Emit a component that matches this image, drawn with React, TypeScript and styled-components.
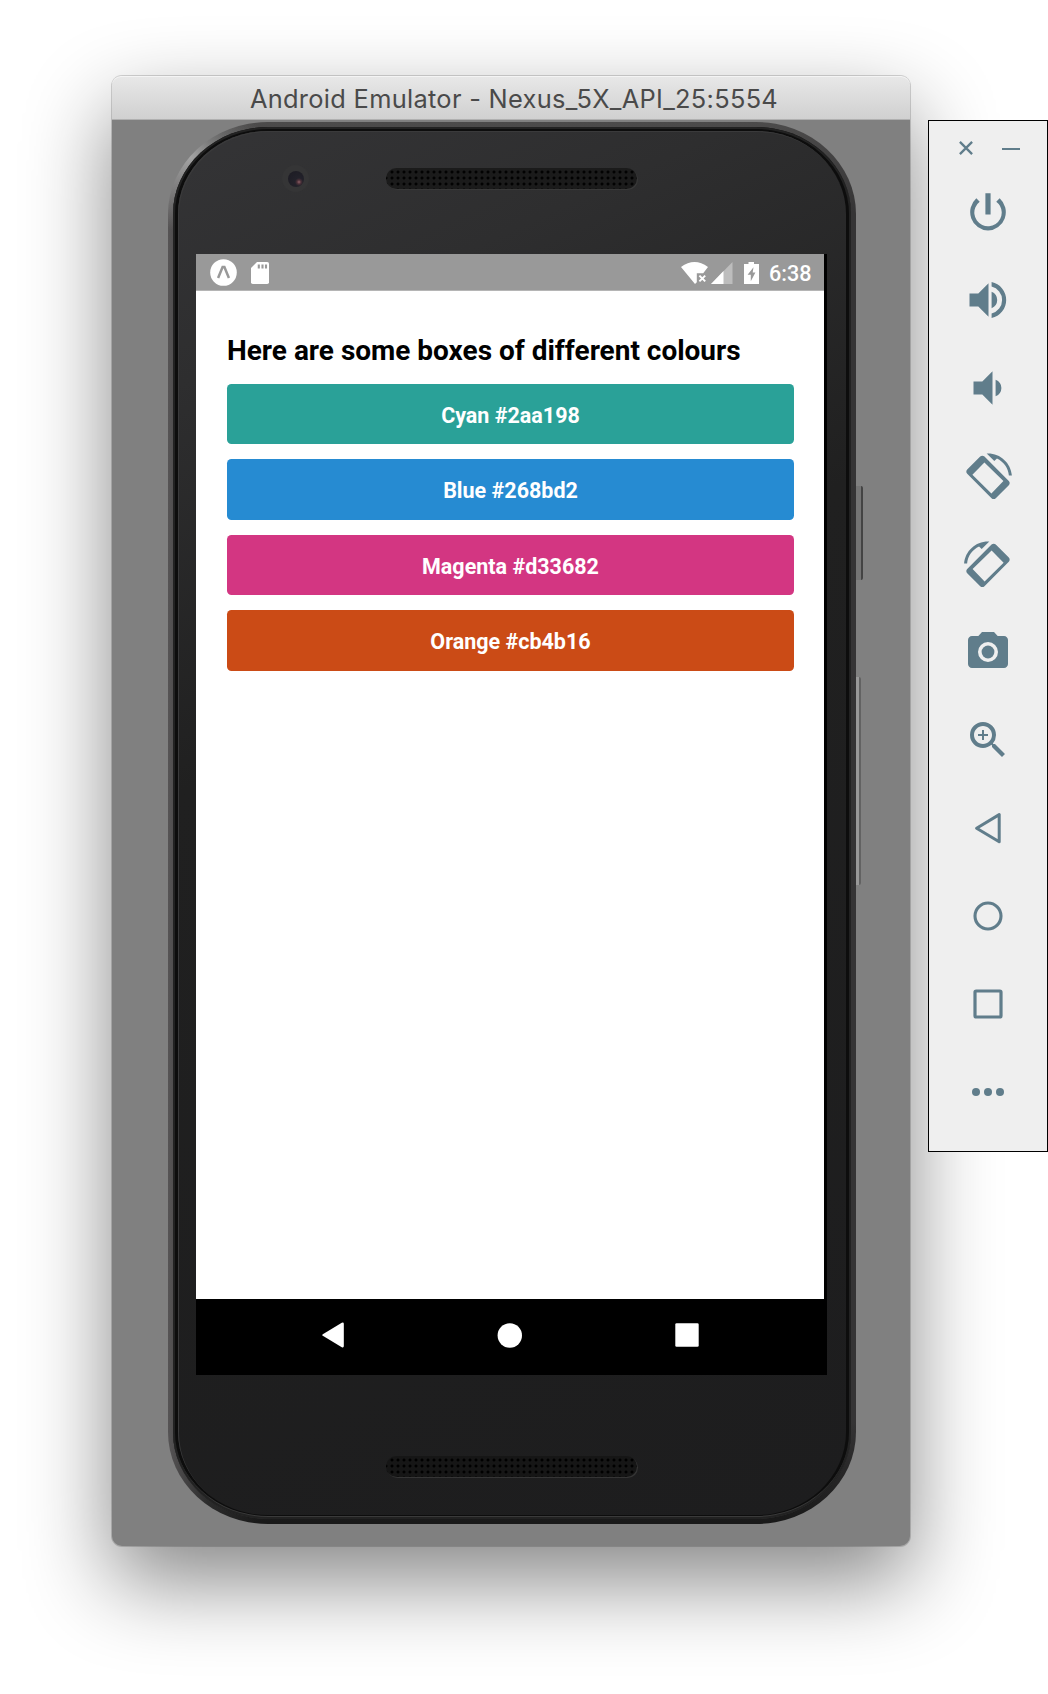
import React from 'react';
import styled, { createGlobalStyle } from 'styled-components';

const GlobalStyle = createGlobalStyle`
  *, *::before, *::after { box-sizing: border-box; }
  body { margin: 0; background: #fff; font-family: Roboto, sans-serif; }
  svg { display: block; flex: none; }
`;

const Desktop = styled.main`
  display: flex;
  align-items: flex-start;
  width: 1048px;
  height: 1694px;
  overflow: hidden;
  background: #fff;
`;

const Window = styled.section`
  flex: none;
  width: 798px;
  height: 1470px;
  margin: 76px 0 0 112px;
  border-radius: 10px;
  background: #808080;
  box-shadow: 0 0 0 1px rgba(0, 0, 0, 0.16), 0 35px 86px rgba(0, 0, 0, 0.48);
`;

const TitleBar = styled.header`
  display: flex;
  justify-content: center;
  height: 44px;
  padding-left: 6px;
  border-radius: 9px 9px 0 0;
  border-bottom: 1px solid #b0b0b0;
  background: linear-gradient(#e8e8e8, #d0d0d0);
  box-shadow: inset 0 1px 0 #f4f4f4;
  color: #4a4a4a;
  font: 400 25.4px/45px Inter, sans-serif;
  letter-spacing: 0.3px;
  white-space: nowrap;
`;

const Stage = styled.div`
  display: flex;
  align-items: flex-start;
  padding: 2px 0 0 56px;
`;

const Rim = styled.div`
  flex: none;
  width: 688px;
  height: 1402px;
  padding: 5px 5px 5px 5px;
  border-radius: 100px / 92px;
  background:
    radial-gradient(circle at 22px 35px, rgba(190, 190, 190, 0.8), transparent 75px),
    linear-gradient(90deg, #565455 0, #2b2b2b 40px, transparent 90px),
    linear-gradient(#4c4b4b 0, #353435 90px, #353435 1300px, #191919 1400px);
`;

const Bezel = styled.div`
  height: 100%;
  padding: 4px 5px 4px 5px;
  border-radius: 95px / 87px;
  background: #0d0d0d;
  box-shadow: inset 0 0 0 2px #222, inset 0 -2px 0 1px #3a3a3a;
`;

const Glass = styled.div`
  height: 100%;
  padding-left: 18px;
  border-radius: 90px / 83px;
  background: linear-gradient(155deg, #343436 0, #2e2e2f 230px, #202020 600px, #1d1d1e 100%);
  box-shadow: inset 1px 1px 0 #3a3a3b;
`;

const Forehead = styled.div`
  display: flex;
  height: 123px;
  padding: 34px 0 0 86px;
`;

const Camera = styled.div`
  display: grid;
  place-items: center;
  width: 27px;
  height: 27px;
  margin-right: 77px;
  border-radius: 50%;
  background: #353536;
`;

const Lens = styled.div`
  width: 16px;
  height: 16px;
  border-radius: 50%;
  background: radial-gradient(circle at 11px 11px, #906068 0, #4a3038 2px, #22212a 4px, #1c1b22);
`;

const Grille = styled.div<{ $lower?: boolean }>`
  width: 251px;
  height: 21px;
  margin: ${(p) => (p.$lower ? '81px 0 0 190px' : '3px 0 0')};
  border-radius: 11px;
  background:
    radial-gradient(circle at 3px 3px, ${(p) => (p.$lower ? '#000' : '#020202')} 1px, transparent 1.9px) 3px 1px / 6px 6px,
    ${(p) => (p.$lower ? '#161616' : '#1b1b1b')};
  box-shadow: 1px 1px 0 ${(p) => (p.$lower ? '#353535' : '#393939')};
`;

const Screen = styled.div`
  width: 631px;
  height: 1121px;
  padding-right: 3px;
  background: #000;
`;

const StatusBar = styled.div`
  display: flex;
  align-items: center;
  height: 36px;
  padding: 1px 12px 0 14px;
  background: #999;
  color: #fff;
`;

const StatusIcons = styled.div<{ $end?: boolean }>`
  display: flex;
  align-items: center;
  gap: ${(p) => (p.$end ? 0 : '14px')};
  margin-left: ${(p) => (p.$end ? 'auto' : 0)};
`;

const Clock = styled.time`
  width: 43px;
  margin-left: 10px;
  font: 500 21.6px/34px Roboto, sans-serif;
  padding-top: 2px;
`;

const AppView = styled.div`
  height: 1008.5px;
  padding: 44px 30px 0 31px;
  border-top: 1px solid #b5b5b5;
  background: #fff;
`;

const Heading = styled.h1`
  margin: 0 0 17px;
  color: #000;
  font: 700 27.98px/32px Roboto, sans-serif;
  white-space: nowrap;
`;

const ColourList = styled.div`
  display: grid;
  gap: 15.4px;
`;

const ColourBox = styled.div<{ $colour: string }>`
  height: 60.1px;
  border-radius: 4.5px;
  background: ${(p) => p.$colour};
  color: #fff;
  text-align: center;
  font: 700 21.5px/63px Roboto, sans-serif;
`;

const NavBar = styled.nav`
  display: flex;
  align-items: center;
  justify-content: space-between;
  height: 76px;
  padding: 0 125px 3px 126px;
`;

const SideButtons = styled.div`
  display: grid;
  gap: 97px;
  padding-top: 364px;
`;

const SideButton = styled.div<{ $tall?: boolean }>`
  width: ${(p) => (p.$tall ? 5 : 7)}px;
  height: ${(p) => (p.$tall ? 208 : 94)}px;
  border-radius: 0 2px 2px 0;
  border-right: ${(p) => (p.$tall ? '2px solid #626262' : '2px solid #444')};
  background: ${(p) => (p.$tall ? '#999' : '#747474')};
`;

const Toolbar = styled.aside`
  flex: none;
  width: 120px;
  height: 1032px;
  margin: 120px 0 0 18px;
  border: 1px solid #000;
  background: #efefef;
  color: #607d8b;
  z-index: 1;
`;

const WindowControls = styled.div`
  display: flex;
  align-items: center;
  gap: 29px;
  height: 48px;
  padding: 6px 0 0 30px;
`;

const Tools = styled.div`
  display: flex;
  flex-direction: column;
  align-items: center;
  gap: 40px;
  padding-top: 19px;
`;

const ToolIcon = styled.svg.attrs({ viewBox: '0 0 24 24', width: 48, height: 48, fill: 'currentColor' })``;

const RotateShape = () => (
  <g transform="translate(0 .7)">
    <path d="M16.48 2.52c3.27 1.55 5.61 4.72 5.97 8.48h1.5C23.44 4.84 18.29 0 12 0l-.66.03 3.81 3.81 1.33-1.32z" />
    <path
      fillRule="evenodd"
      d="M10.23 1.6c-.59-.59-1.54-.59-2.12 0L1.6 8.11c-.59.59-.59 1.54 0 2.12l12.17 12.17c.59.59 1.54.59 2.12 0l6.51-6.51c.59-.59.59-1.54 0-2.12L10.23 1.6zM4.2 10.7l6-6.200 9.500 9.300-6 6.200z"
    />
  </g>
);

const COLOURS = [
  { name: 'Cyan', hex: '#2aa198' },
  { name: 'Blue', hex: '#268bd2' },
  { name: 'Magenta', hex: '#d33682' },
  { name: 'Orange', hex: '#cb4b16' },
];

const TOOLS: React.ReactNode[] = [
  <path d="M13.3 2.6h-2.6v10.7h2.6zM17.83 5.17l-1.7 1.7A6.9 6.9 0 0 1 18.85 12 6.85 6.85 0 1 1 7.85 6.87L6.17 5.17A9.25 9.25 0 0 0 12 21.3a9.25 9.25 0 0 0 5.83-16.13z" />,
  <path d="M2.75 8.7v6.6h4.4l5.1 5.1V3.6l-5.1 5.1zM16.6 12A4.5 4.5 0 0 0 13.8 7.9v8.2A4.5 4.5 0 0 0 16.6 12zM13.8 3v2.3a6.9 6.9 0 0 1 0 13.4V21a9.2 9.2 0 0 0 0-18z" />,
  <path d="M4.75 8.7v6.6h4.4l5.1 5.1V3.6l-5.1 5.1zM18.7 12A4.5 4.5 0 0 0 15.8 7.9v8.2A4.5 4.5 0 0 0 18.7 12z" />,
  <RotateShape />,
  <g transform="matrix(-1 0 0 1 24 0)"><RotateShape /></g>,
  <>
    <circle cx="12" cy="12" r="3.2" />
    <path fillRule="evenodd" d="M9 2 7.17 4H4c-1.1 0-2 .9-2 2v12c0 1.1.9 2 2 2h16c1.1 0 2-.9 2-2V6c0-1.1-.9-2-2-2h-3.17L15 2zM12 17a5 5 0 1 1 0-10 5 5 0 0 1 0 10z" />
  </>,
  <path d="M15.5 14h-.79l-.28-.27A6.471 6.471 0 0 0 16 9.5 6.5 6.5 0 1 0 9.5 16c1.61 0 3.09-.59 4.23-1.57l.27.28v.79l5 4.99L20.49 19l-4.99-5zm-6 0C7.01 14 5 11.99 5 9.5S7.01 5 9.5 5 14 7.01 14 9.5 11.99 14 9.5 14zm2.5-4h-2v2H9v-2H7V9h2V7h1v2h2v1z" />,
  <path d="M6.3 12.1 17.6 5.3v13.6z" fill="none" stroke="currentColor" strokeWidth="1.5" strokeLinejoin="round" />,
  <circle cx="12" cy="12" r="6.5" fill="none" stroke="currentColor" strokeWidth="1.55" />,
  <rect x="5.5" y="5.5" width="13" height="13" rx=".6" fill="none" stroke="currentColor" strokeWidth="1.6" />,
  <>
    <circle cx="6" cy="12" r="2" />
    <circle cx="12" cy="12" r="2" />
    <circle cx="18" cy="12" r="2" />
  </>,
];

const ExpoIcon = () => (
  <svg width="27" height="27" viewBox="0 0 27 27">
    <circle cx="13.5" cy="13.5" r="13.3" fill="#fff" />
    <path d="M8.1 19 12.6 8h1.8L18.900 19" fill="none" stroke="#999" strokeWidth="2.500" />
  </svg>
);

const SdIcon = () => (
  <svg width="18" height="22" viewBox="0 0 18 22">
    <path d="M6 0h10.2Q18 0 18 1.800v18.400Q18 22 16.200 22H1.800Q0 22 0 20.200V6z" fill="#fff" />
    <path d="M7.800 2.500v4M11.500 2.500v4M15 2.500v4" stroke="#999" strokeWidth="2.100" />
  </svg>
);

const WifiIcon = () => (
  <svg width="27" height="22" viewBox="0 0 27 22">
    <path d="M0 4.900Q13.500-4.900 27 4.900L22.200 11.300H15.800V20.200L14 22z" fill="#fff" />
    <path d="m18.400 13.600 5.800 5.800m0-5.800-5.800 5.800" stroke="#fff" strokeWidth="2" />
  </svg>
);

const SignalSvg = styled.svg`
  margin-left: 3px;
`;

const SignalIcon = () => (
  <SignalSvg width="22" height="22" viewBox="0 0 22 22">
    <path d="M21.500 0v22H0z" fill="#bdbdbd" />
    <path d="M12.500 9v13H0z" fill="#fff" />
  </SignalSvg>
);

const BatterySvg = styled.svg`
  margin-left: 11px;
`;

const BatteryIcon = () => (
  <BatterySvg width="15" height="22" viewBox="0 0 15 22">
    <path d="M4.500 0h5.500v2H15v20H0V2h4.500z" fill="#fff" />
    <path d="M9.500 5.200 3.600 12.800h3.200v6.500L11.400 10.500H8.700z" fill="#999" />
  </BatterySvg>
);

const MinimizeSvg = styled.svg`
  margin-top: 2px;
`;

export default function App() {
  return (
    <Desktop>
      <GlobalStyle />
      <Window>
        <TitleBar>Android Emulator - Nexus_5X_API_25:5554</TitleBar>
        <Stage>
          <Rim>
            <Bezel>
              <Glass>
                <Forehead>
                  <Camera><Lens /></Camera>
                  <Grille />
                </Forehead>
                <Screen>
                  <StatusBar>
                    <StatusIcons>
                      <ExpoIcon />
                      <SdIcon />
                    </StatusIcons>
                    <StatusIcons $end>
                      <WifiIcon />
                      <SignalIcon />
                      <BatteryIcon />
                      <Clock>6:38</Clock>
                    </StatusIcons>
                  </StatusBar>
                  <AppView>
                    <Heading>Here are some boxes of different colours</Heading>
                    <ColourList>
                      {COLOURS.map((c) => (
                        <ColourBox key={c.hex} $colour={c.hex}>{c.name} {c.hex}</ColourBox>
                      ))}
                    </ColourList>
                  </AppView>
                  <NavBar>
                    <svg width="22" height="26" viewBox="0 0 22 26" fill="#fff">
                      <path d="M.8 12.200 19.800.8q2-.9 2 1.200v22q0 2.100-2 1.200L.8 13.800q-1.200-.8 0-1.600z" />
                    </svg>
                    <svg width="25" height="25" viewBox="0 0 25 25" fill="#fff"><circle cx="12.800" cy="12.500" r="12.200" /></svg>
                    <svg width="24" height="24" viewBox="0 0 24 24" fill="#fff"><rect x=".3" y=".3" width="23.400" height="23.400" rx="1.300" /></svg>
                  </NavBar>
                </Screen>
                <Grille $lower />
              </Glass>
            </Bezel>
          </Rim>
          <SideButtons>
            <SideButton />
            <SideButton $tall />
          </SideButtons>
        </Stage>
      </Window>
      <Toolbar>
        <WindowControls>
          <svg width="14" height="14" viewBox="0 0 14 14" stroke="currentColor" strokeWidth="2.300"><path d="m.9.9 12.200 12.200m0-12.200L.9 13.100" /></svg>
          <MinimizeSvg width="18" height="2" viewBox="0 0 18 2" fill="currentColor"><path d="M0 0h18v2H0z" /></MinimizeSvg>
        </WindowControls>
        <Tools>
          {TOOLS.map((icon, i) => <ToolIcon key={i}>{icon}</ToolIcon>)}
        </Tools>
      </Toolbar>
    </Desktop>
  );
}
